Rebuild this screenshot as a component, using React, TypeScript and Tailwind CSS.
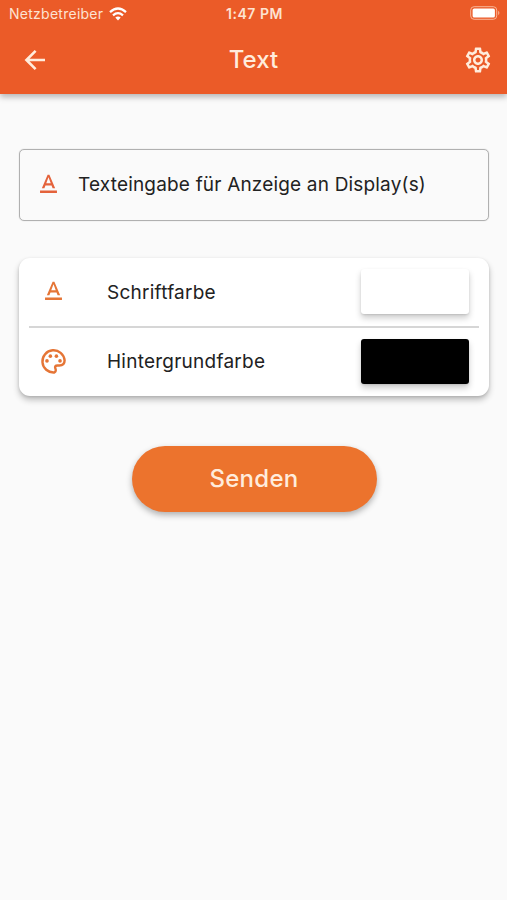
import React from "react";
import { MdOutlineSettings, MdTextFormat } from "react-icons/md";

function StatusBar() {
  return (
    <div className="grid h-[27px] grid-cols-3 items-center pl-[9px] pr-[7px] text-[14px] leading-none text-[#fde3d2]">
      <div className="flex items-center gap-[6px]">
        <span className="pt-px tracking-[0.26px]">Netzbetreiber</span>
        <svg width="18" height="14" viewBox="0 0 18 14" fill="none" stroke="#fff" strokeWidth="2.3">
          <path d="M1 5.1 Q9 -2 17 5.1" />
          <path d="M4 8.3 Q9 4 14 8.3" />
          <path d="M6.3 10.6 Q9 8.5 11.7 10.6 L9 13.4 Z" fill="#fff" stroke="none" />
        </svg>
      </div>
      <span className="text-center text-[14px] font-semibold tracking-[0.5px]">1:47 PM</span>
      <div className="flex justify-end">
        <svg width="30" height="14" viewBox="0 0 30 14" fill="none" className="-mt-px">
          <rect x="0.7" y="0.7" width="26" height="12.6" rx="3.4" stroke="#f9b598" strokeWidth="1" />
          <rect x="2.6" y="2.5" width="22.3" height="9" rx="1.6" fill="#fff" />
          <path d="M28.2 4.8 Q30.6 7 28.2 9.2 Z" fill="#f9b598" />
        </svg>
      </div>
    </div>
  );
}

function BackIcon() {
  return (
    <svg width="30" height="30" viewBox="0 0 30 30" fill="none" stroke="currentColor" strokeWidth="2.6">
      <path d="M25 15 H7 M15.6 5.8 L6.4 15 L15.6 24.2" />
    </svg>
  );
}

function PaletteIcon() {
  return (
    <svg width="29" height="29" viewBox="0 0 24 24" fill="none" stroke="currentColor" strokeWidth="2" strokeLinejoin="round">
      <path d="M12.6 21.1 A9.2 9.2 0 1 1 21.2 11 C21.2 13.8 19.3 15.3 16.8 15.3 H15.2 C13.6 15.3 13 16.3 13.5 17.6 C14.1 19.1 14.1 20.6 12.6 21.1 Z" />
      <g fill="currentColor" stroke="none">
        <circle cx="6.6" cy="11.5" r="1.5" />
        <circle cx="9.4" cy="7.6" r="1.5" />
        <circle cx="14.4" cy="7.6" r="1.5" />
        <circle cx="17.4" cy="11.5" r="1.5" />
      </g>
    </svg>
  );
}

function ColorRow({ icon, label, swatch }: { icon: React.ReactNode; label: string; swatch: string }) {
  return (
    <div className="flex h-[69px] items-center pb-[2px]">
      <div className="w-[88px] pl-[20px] text-[#e57536]">{icon}</div>
      <span className="flex-1 pt-px tracking-[0.24px]">{label}</span>
      <div
        className={`mr-[20px] h-[45px] w-[108px] rounded-[3px] shadow-[0_4px_6px_rgba(0,0,0,0.2),0_1px_2px_rgba(0,0,0,0.1)] ${swatch}`}
      />
    </div>
  );
}

export default function App() {
  return (
    <div className="min-h-[900px] w-[507px] bg-[#fafafa] font-['Inter',sans-serif] text-[19px] leading-none tracking-[0.18px] text-[#222]">
      <header className="h-[94px] bg-[#eb5b28] shadow-[0_3px_6px_rgba(0,0,0,0.28)]">
        <StatusBar />
        <div className="flex h-[65px] items-center justify-between pr-[14px] pl-[20px] text-[#ffecdc]">
          <BackIcon />
          <h1 className="ml-[-6px] pt-px text-center text-[24px] font-medium tracking-normal">Text</h1>
          <MdOutlineSettings size={30} />
        </div>
      </header>

      <main className="flex flex-col pt-[55px] pr-[18px] pl-[19px]">
        <div className="flex h-[72px] items-center rounded-[5px] border border-[#b0b0b0] pb-px pl-[14px] shadow-[0_0_1px_rgba(0,0,0,0.3)]">
          <MdTextFormat size={29} className="text-[#e4623b]" />
          <span className="pl-[15px]">Texteingabe für Anzeige an Display(s)</span>
        </div>

        <section className="mt-[37px] h-[138px] rounded-[11px] bg-white shadow-[0_4px_6px_rgba(0,0,0,0.24),0_1px_3px_rgba(0,0,0,0.12)]">
          <ColorRow icon={<MdTextFormat size={29} />} label="Schriftfarbe" swatch="bg-white" />
          <div className="mx-[10px] -mt-px h-[1.5px] bg-[#d6d6d6]" />
          <ColorRow icon={<PaletteIcon />} label="Hintergrundfarbe" swatch="bg-black" />
        </section>

        <button className="mt-[50px] ml-[112.5px] h-[66px] w-[245px] rounded-full bg-[#ec732d] text-[24px] font-medium tracking-[0.3px] text-[#ffecdc] shadow-[0_3px_6px_rgba(0,0,0,0.3)]">
          Senden
        </button>
      </main>
    </div>
  );
}
